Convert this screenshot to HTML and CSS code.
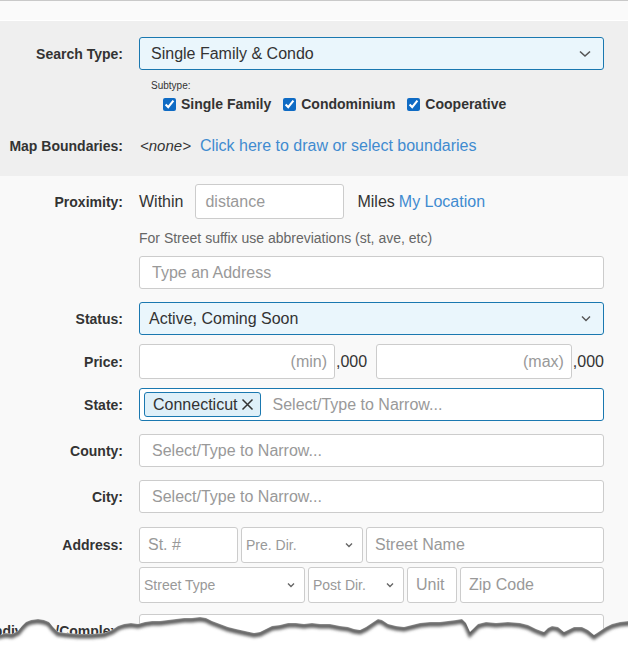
FILE: index.html
```html
<!DOCTYPE html>
<html lang="en">
<head>
    <meta charset="UTF-8">
    <meta name="viewport" content="width=device-width, initial-scale=1.0">
    <title>Property Search</title>
    <link rel="stylesheet" href="styles.css">
</head>
<body>
    <div class="topbar"></div>

    <section class="panel panel-gray">
        <div class="row">
            <label class="row-label">Search Type:</label>
            <div class="select select-active select-main">
                <span>Single Family &amp; Condo</span>
                <svg class="chevron" width="12" height="8" viewBox="0 0 12 8"><path d="M1 1.5 L6 6 L11 1.5" /></svg>
            </div>
        </div>

        <div class="row">
            <span></span>
            <div class="subtype">
                <div class="subtype-title">Subtype:</div>
                <div class="subtype-list">
                    <label class="check"><input type="checkbox" checked> Single Family</label>
                    <label class="check"><input type="checkbox" checked> Condominium</label>
                    <label class="check"><input type="checkbox" checked> Cooperative</label>
                </div>
            </div>
        </div>

        <div class="row row-map">
            <label class="row-label">Map Boundaries:</label>
            <div class="inline-field">
                <em class="none">&lt;none&gt;</em>
                <a href="#" class="link">Click here to draw or select boundaries</a>
            </div>
        </div>
    </section>

    <section class="panel">
        <div class="row row-proximity">
            <label class="row-label">Proximity:</label>
            <div class="inline-field">
                <span>Within</span>
                <input type="text" class="input input-distance" placeholder="distance">
                <span class="miles">Miles</span>
                <a href="#" class="link">My Location</a>
            </div>
        </div>

        <div class="row row-help">
            <span></span>
            <p class="help">For Street suffix use abbreviations (st, ave, etc)</p>
        </div>

        <div class="row row-gap-sm">
            <span></span>
            <input type="text" class="input" placeholder="Type an Address">
        </div>

        <div class="row row-gap-md">
            <label class="row-label">Status:</label>
            <div class="select select-active">
                <span>Active, Coming Soon</span>
                <svg class="chevron chevron-sm" width="10" height="7" viewBox="0 0 10 7"><path d="M1 1.5 L5 5.5 L9 1.5" /></svg>
            </div>
        </div>

        <div class="row row-gap-sm">
            <label class="row-label">Price:</label>
            <div class="price">
                <input type="text" class="input input-price" placeholder="(min)">
                <span class="thousands">,000</span>
                <input type="text" class="input input-price" placeholder="(max)">
                <span class="thousands">,000</span>
            </div>
        </div>

        <div class="row row-gap-sm">
            <label class="row-label">State:</label>
            <div class="multi">
                <span class="tag">Connecticut
                    <svg class="tag-x" width="13" height="13" viewBox="0 0 13 13"><path d="M1.5 1.5 L11.5 11.5 M11.5 1.5 L1.5 11.5" /></svg>
                </span>
                <span class="placeholder">Select/Type to Narrow...</span>
            </div>
        </div>

        <div class="row row-gap-md">
            <label class="row-label">County:</label>
            <input type="text" class="input" placeholder="Select/Type to Narrow...">
        </div>

        <div class="row row-gap-md">
            <label class="row-label">City:</label>
            <input type="text" class="input" placeholder="Select/Type to Narrow...">
        </div>

        <div class="row row-address">
            <label class="row-label">Address:</label>
            <div class="address">
                <div class="address-line">
                    <input type="text" class="input input-tall w-num" placeholder="St. #">
                    <div class="select select-small w-predir">
                        <span>Pre. Dir.</span>
                        <svg class="chevron chevron-xs" width="8" height="6" viewBox="0 0 8 6"><path d="M1 1.5 L4 4.5 L7 1.5" /></svg>
                    </div>
                    <input type="text" class="input input-tall grow" placeholder="Street Name">
                </div>
                <div class="address-line">
                    <div class="select select-small w-type">
                        <span>Street Type</span>
                        <svg class="chevron chevron-xs" width="8" height="6" viewBox="0 0 8 6"><path d="M1 1.5 L4 4.5 L7 1.5" /></svg>
                    </div>
                    <div class="select select-small w-postdir">
                        <span>Post Dir.</span>
                        <svg class="chevron chevron-xs" width="8" height="6" viewBox="0 0 8 6"><path d="M1 1.5 L4 4.5 L7 1.5" /></svg>
                    </div>
                    <input type="text" class="input input-tall input-unit" placeholder="Unit">
                    <input type="text" class="input input-tall grow" placeholder="Zip Code">
                </div>
            </div>
        </div>

        <div class="row row-subdivision">
            <label class="row-label row-label-wide">Subdivision/Complex:</label>
            <input type="text" class="input">
        </div>
    </section>

    <!-- ragged paper edge along the bottom -->
    <svg class="torn" width="628" height="46" viewBox="0 600 628 46">
        <defs>
            <filter id="tear-blur" x="-5%" y="-50%" width="110%" height="200%">
                <feGaussianBlur stdDeviation="1.7" />
            </filter>
            <clipPath id="tear-below">
                <path d="M0 635 L6 633 L12 634 L18 631 L22 626 L26 622 L31 620 L38 619 L44 620 L49 622 L53 627 L58 632 L66 633 L78 634 L92 634 L104 633 L112 630 L118 626 L124 624 L131 623 L138 624 L145 622 L152 621 L160 621 L168 620 L176 619 L184 618 L192 618 L200 617 L206 618 L212 621 L220 624 L228 627 L236 629 L245 631 L254 633 L260 632 L266 629 L272 626 L280 625 L288 623 L296 623 L304 624 L312 623 L320 624 L330 624 L340 626 L348 627 L354 629 L360 630 L366 627 L372 623 L378 619 L382 620 L388 624 L396 626 L404 627 L412 625 L420 623 L430 622 L440 622 L448 621 L456 620 L462 619 L466 623 L470 632 L474 628 L478 624 L486 622 L496 623 L508 622 L520 623 L528 625 L536 629 L544 632 L548 628 L552 626 L558 627 L564 632 L568 630 L574 627 L582 627 L588 630 L594 635 L600 631 L606 627 L612 624 L620 622 L628 621 L628 646 L0 646 Z" />
            </clipPath>
        </defs>
        <path fill="#fff" d="M0 635 L6 633 L12 634 L18 631 L22 626 L26 622 L31 620 L38 619 L44 620 L49 622 L53 627 L58 632 L66 633 L78 634 L92 634 L104 633 L112 630 L118 626 L124 624 L131 623 L138 624 L145 622 L152 621 L160 621 L168 620 L176 619 L184 618 L192 618 L200 617 L206 618 L212 621 L220 624 L228 627 L236 629 L245 631 L254 633 L260 632 L266 629 L272 626 L280 625 L288 623 L296 623 L304 624 L312 623 L320 624 L330 624 L340 626 L348 627 L354 629 L360 630 L366 627 L372 623 L378 619 L382 620 L388 624 L396 626 L404 627 L412 625 L420 623 L430 622 L440 622 L448 621 L456 620 L462 619 L466 623 L470 632 L474 628 L478 624 L486 622 L496 623 L508 622 L520 623 L528 625 L536 629 L544 632 L548 628 L552 626 L558 627 L564 632 L568 630 L574 627 L582 627 L588 630 L594 635 L600 631 L606 627 L612 624 L620 622 L628 621 L628 646 L0 646 Z" />
        <g clip-path="url(#tear-below)">
            <path class="tear-shadow" filter="url(#tear-blur)" transform="translate(0 2)" d="M-4 635 L6 633 L12 634 L18 631 L22 626 L26 622 L31 620 L38 619 L44 620 L49 622 L53 627 L58 632 L66 633 L78 634 L92 634 L104 633 L112 630 L118 626 L124 624 L131 623 L138 624 L145 622 L152 621 L160 621 L168 620 L176 619 L184 618 L192 618 L200 617 L206 618 L212 621 L220 624 L228 627 L236 629 L245 631 L254 633 L260 632 L266 629 L272 626 L280 625 L288 623 L296 623 L304 624 L312 623 L320 624 L330 624 L340 626 L348 627 L354 629 L360 630 L366 627 L372 623 L378 619 L382 620 L388 624 L396 626 L404 627 L412 625 L420 623 L430 622 L440 622 L448 621 L456 620 L462 619 L466 623 L470 632 L474 628 L478 624 L486 622 L496 623 L508 622 L520 623 L528 625 L536 629 L544 632 L548 628 L552 626 L558 627 L564 632 L568 630 L574 627 L582 627 L588 630 L594 635 L600 631 L606 627 L612 624 L620 622 L632 621" />
        </g>
    </svg>
</body>
</html>
```

FILE: styles.css
```css
body {
    margin: 0;
    height: 646px;
    overflow: hidden;
    position: relative;
    background: #f9f9f9;
    font-family: 'Liberation Sans', Arial, sans-serif;
    font-size: 16px;
    color: #333;
}

.topbar {
    height: 19px;
    background: #fafafa;
    border-top: 1px solid #c9c9c9;
    border-bottom: 1px solid #fff;
}

.panel-gray {
    background: #efefef;
    padding: 16px 0 20px;
}

.row {
    display: grid;
    grid-template-columns: 123px 465px;
    column-gap: 16px;
    align-items: center;
}

.row-label {
    text-align: right;
    font-weight: bold;
    font-size: 14px;
    color: #333;
}

/* long label spills out to the left instead of wrapping */
.row-label-wide {
    display: flex;
    justify-content: flex-end;
    white-space: nowrap;
}

/* select look-alikes */
.select {
    box-sizing: border-box;
    height: 33px;
    display: flex;
    align-items: center;
    justify-content: space-between;
    padding: 0 12px 0 9px;
    border: 1px solid #ccc;
    border-radius: 3px;
    background: #fff;
}

.select-active {
    border-color: #1a78b0;
    background: #eaf6fc;
}

.select-main {
    padding-left: 11px;
}

.chevron path {
    fill: none;
    stroke: #555;
    stroke-width: 1.6;
}

.chevron-sm path {
    stroke-width: 1.4;
}

.chevron-xs path {
    stroke: #666;
    stroke-width: 1.4;
}

.select-small {
    height: 36px;
    padding: 0 9px 0 4px;
    font-size: 14px;
    color: #999;
}

/* subtype checkboxes */
.subtype {
    padding: 10px 0 0 12px;
}

.subtype-title {
    font-size: 10px;
    line-height: 12px;
    color: #333;
}

.subtype-list {
    display: flex;
    gap: 12px;
    padding-left: 12px;
    margin-top: 3px;
    line-height: 18px;
}

.check {
    display: flex;
    align-items: center;
    font-weight: bold;
    font-size: 14px;
}

.check input {
    width: 13px;
    height: 13px;
    margin: 0 5px 0 0;
    accent-color: #0f6bc4;
}

.row-map {
    margin-top: 23px;
    line-height: 20px;
}

.inline-field {
    display: flex;
    align-items: center;
}

.none {
    font-size: 15px;
    margin: 0 9px 0 1px;
}

.link {
    color: #3f8bd0;
    text-decoration: none;
}

/* plain inputs */
.input {
    box-sizing: border-box;
    width: 100%;
    height: 33px;
    margin: 0;
    padding: 0 12px;
    border: 1px solid #ccc;
    border-radius: 3px;
    background: #fff;
    font-family: inherit;
    font-size: 16px;
    color: #333;
}

.input::placeholder {
    color: #999;
}

.row-proximity {
    margin-top: 8px;
}

.input-distance {
    width: 149px;
    height: 35px;
    margin-left: 12px;
    padding-left: 9px;
}

.miles {
    margin: 0 4px 0 13px;
}

.row-help {
    margin-top: 10px;
}

.help {
    margin: 0;
    font-size: 14px;
    line-height: 18px;
    color: #666;
}

.row-gap-sm {
    margin-top: 9px;
}

.row-gap-md {
    margin-top: 13px;
}

.price {
    display: flex;
    align-items: center;
}

.input-price {
    width: 196px;
    height: 35px;
    text-align: right;
    padding-right: 7px;
}

.thousands {
    width: 41px;
    padding-left: 1px;
}

.thousands:last-child {
    width: auto;
}

/* state multi-select */
.multi {
    box-sizing: border-box;
    height: 33px;
    display: flex;
    align-items: center;
    padding-left: 4px;
    border: 1px solid #1a78b0;
    border-radius: 3px;
    background: #fff;
}

.tag {
    box-sizing: border-box;
    height: 25px;
    display: flex;
    align-items: center;
    gap: 3px;
    padding: 0 6px 0 8px;
    border: 1px solid #1a78b0;
    border-radius: 3px;
    background: #dff0f9;
}

.tag-x path {
    stroke: #333;
    stroke-width: 1.5;
}

.placeholder {
    margin-left: 12px;
    color: #999;
}

/* street address block */
.row-address {
    margin-top: 14px;
    align-items: start;
}

.row-address .row-label {
    line-height: 36px;
}

.address {
    display: flex;
    flex-direction: column;
    gap: 4px;
}

.address-line {
    display: flex;
    gap: 3px;
}

.input-tall {
    height: 36px;
    padding-left: 8px;
}

.w-num {
    width: 99px;
}

.w-predir {
    width: 122px;
}

.w-type {
    width: 166px;
}

.w-postdir {
    width: 96px;
}

.input-unit {
    width: 50px;
    padding: 0 8px;
}

.grow {
    flex: 1;
    width: auto;
    min-width: 0;
}

.row-subdivision {
    margin-top: 11px;
}

.row-subdivision .input {
    height: 34px;
}

.torn {
    position: absolute;
    left: 0;
    bottom: 0;
    display: block;
}

.tear-shadow {
    fill: none;
    stroke: #5e5e5e;
    stroke-width: 5;
}
```
